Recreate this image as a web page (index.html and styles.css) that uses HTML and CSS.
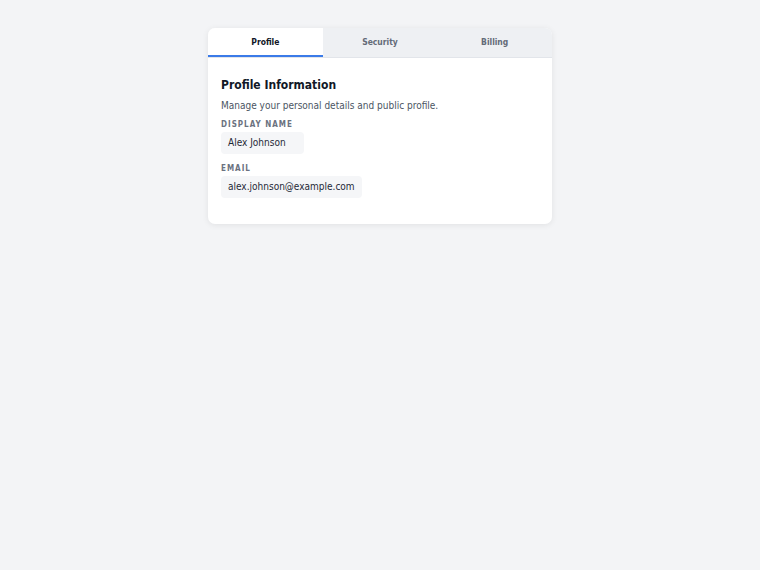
FILE: index.html
```html
<!DOCTYPE html>
<html lang="en">
<head>
    <meta charset="UTF-8">
    <title>Settings</title>
    <link rel="stylesheet" href="styles.css">
</head>
<body>
    <div class="card">
        <nav class="tabs">
            <div class="tab active">Profile</div>
            <div class="tab">Security</div>
            <div class="tab">Billing</div>
        </nav>
        <div class="panel">
            <h2>Profile Information</h2>
            <p class="lead">Manage your personal details and public profile.</p>
            <div class="field">
                <label>Display Name</label>
                <div class="value">Alex Johnson</div>
            </div>
            <div class="field">
                <label>Email</label>
                <div class="value">alex.johnson@example.com</div>
            </div>
        </div>
    </div>
</body>
</html>
```

FILE: styles.css
```css
body {
    font-family: "DejaVu Sans Condensed", "DejaVu Sans", sans-serif;
    background-color: #f3f4f6;
    margin: 0;
    padding: 28px 0;
}
.card {
    width: 344px;
    margin: 0 auto;
    background-color: #fff;
    border-radius: 7px;
    box-shadow: 0 1px 6px rgba(0,0,0,0.08);
    overflow: hidden;
}
.tabs {
    display: flex;
    background-color: #eef0f3;
    border-bottom: 1px solid #e2e5ea;
}
.tab {
    flex: 1;
    text-align: center;
    font-size: 8.5px;
    line-height: 13px;
    font-weight: bold;
    color: #646b78;
    padding: 8px 0 6px;
    border-bottom: 2px solid transparent;
}
.tab.active {
    background-color: #fff;
    color: #111827;
    border-bottom-color: #3b7be8;
}
.panel {
    padding: 19px 13px 26px;
}
h2 {
    margin: 0 0 6px;
    font-size: 12px;
    line-height: 16px;
    color: #111827;
}
.lead {
    margin: 0 0 7px;
    font-size: 10px;
    line-height: 14px;
    color: #4b5563;
}
.field {
    margin-bottom: 10px;
}
.field:last-child {
    margin-bottom: 0;
}
label {
    display: block;
    font-size: 8px;
    line-height: 10px;
    font-weight: bold;
    letter-spacing: 1px;
    text-transform: uppercase;
    color: #6b7280;
    margin-bottom: 1px;
}
.value {
    display: inline-block;
    min-width: 83px;
    box-sizing: border-box;
    background-color: #f5f6f8;
    border-radius: 4px;
    padding: 5px 7px;
    font-size: 10px;
    line-height: 12px;
    color: #1f2937;
}
```
